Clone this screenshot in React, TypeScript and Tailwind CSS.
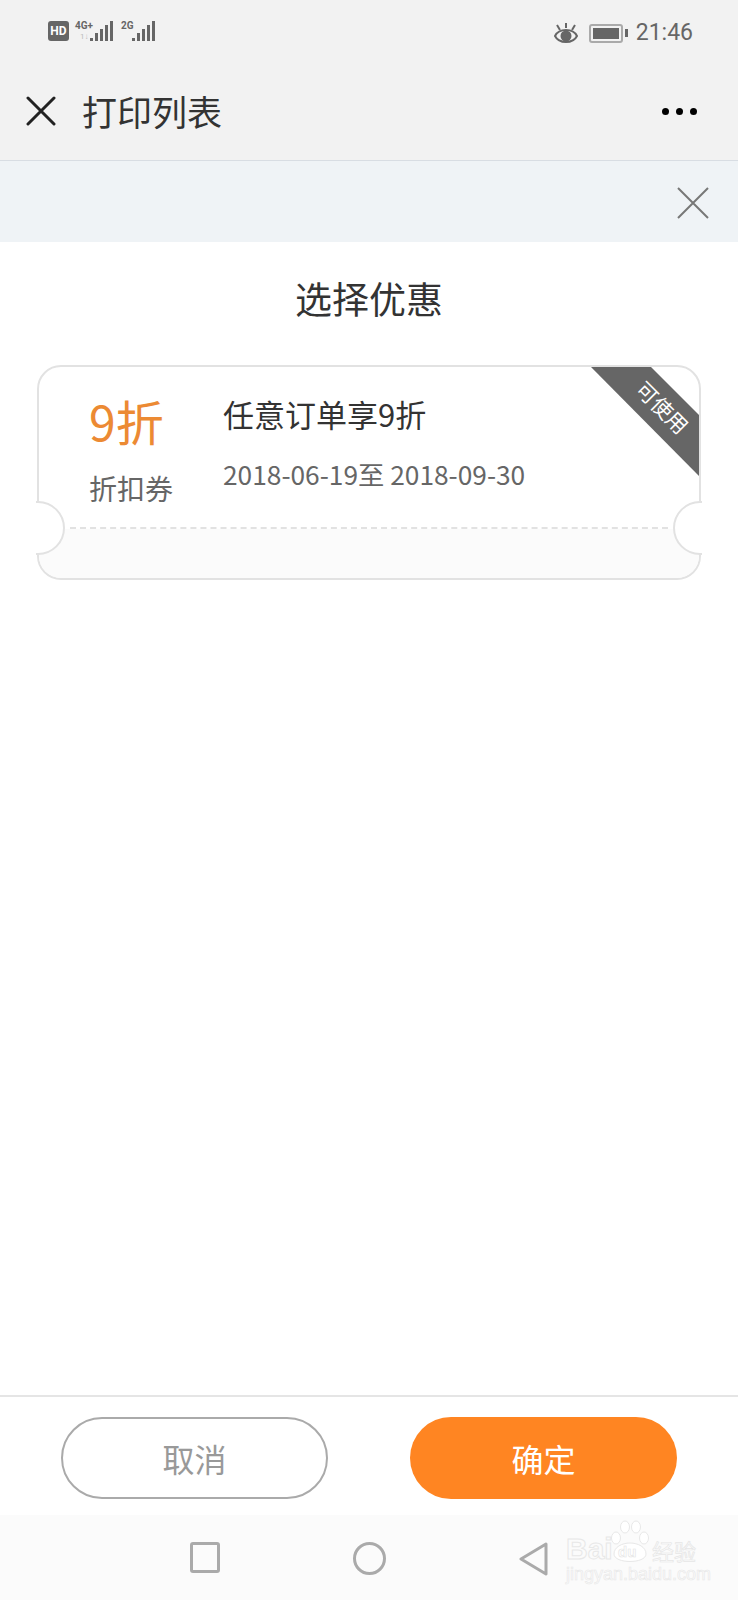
const cjk = "font-['Noto_Sans_CJK_SC',sans-serif]";

function SignalBars() {
  return (
    <svg width="23" height="21" viewBox="0 0 23 21" fill="#666">
      <rect x="0" y="17" width="3" height="3" />
      <rect x="5" y="12" width="3" height="8" />
      <rect x="10" y="8" width="3" height="12" />
      <rect x="15" y="4" width="3" height="16" />
      <rect x="20" y="0" width="3" height="20" />
    </svg>
  );
}

function StatusBar() {
  return (
    <div className="h-[64px] flex items-start justify-between pt-[21px] pl-[48px] pr-[45px]">
      <div className="flex items-start">
        <div className="w-[21px] h-[20px] rounded-[3px] bg-[#666] text-white text-[12px] leading-[20px] font-bold text-center font-['Roboto',sans-serif]">
          HD
        </div>
        <div className="relative w-[15px] ml-[6px] mt-[-1px] h-[22px] text-[10px] leading-[12px] font-bold text-[#666] whitespace-nowrap font-['Roboto',sans-serif]">
          4G+
          <span className="absolute left-[5px] top-[12px] text-[8px] leading-[10px] font-normal text-[#bbb]">1↓</span>
        </div>
        <SignalBars />
        <div className="ml-[8px] w-[11px] mt-[-1px] text-[10px] leading-[12px] font-bold text-[#666] whitespace-nowrap font-['Roboto',sans-serif]">2G</div>
        <SignalBars />
      </div>
      <div className="flex items-center text-[#666]">
        <svg width="24" height="21" viewBox="0 0 24 21" fill="none" stroke="#666" strokeWidth="2">
          <path d="M1 13 C5 5 19 5 23 13 C19 21 5 21 1 13 Z" />
          <circle cx="12" cy="13" r="4.5" fill="#666" />
          <path d="M3 2 L6 7 M21 2 L18 7 M12 0 L12 5" />
        </svg>
        <div className="ml-[11px] w-[34px] h-[19px] rounded-[3px] border-2 border-[#aaa] p-[2px]">
          <div className="w-full h-full bg-[#666]" />
        </div>
        <div className="ml-[2px] w-[3px] h-[8px] bg-[#666]" />
        <span className="ml-[8px] text-[23px] leading-[24px] font-['Roboto',sans-serif]">21:46</span>
      </div>
    </div>
  );
}

function Ticket() {
  return (
    <div className="relative mx-[37px] mt-[40px] h-[215px] rounded-[24px] border-2 border-[#e2e2e2] flex flex-col overflow-hidden bg-white">
      <div className="h-[160px] flex pl-[50px]">
        <div className="w-[134px] flex flex-col">
          <span className="mt-[17px] text-[48px] leading-[72px] text-[#ec8a33]">9折</span>
          <span className="mt-[11px] text-[28px] leading-[42px] text-[#666]">折扣券</span>
        </div>
        <div className="flex flex-col">
          <span className="mt-[25px] text-[31px] leading-[44px] text-[#333]">任意订单享9折</span>
          <span className="mt-[18px] text-[26.3px] leading-[40px] text-[#666]">2018-06-19至 2018-09-30</span>
        </div>
      </div>
      <div className="mx-[31px] border-t-2 border-dashed border-[#e2e2e2]" />
      <div className="flex-1 bg-[#fbfbfb]" />

      <div className="absolute top-[-2px] right-[-2px] w-[112px] h-[113px] bg-[#666] [clip-path:polygon(0_0,60px_0,100%_52px,100%_100%)]">
        <span className="absolute left-[41px] top-[27px] w-[66px] text-center text-white text-[21px] leading-[30px] rotate-45 whitespace-nowrap">
          可使用
        </span>
      </div>
    </div>
  );
}

function Notches() {
  return (
    <>
      <div className="absolute left-[36px] top-[136px] w-[29px] h-[54px] overflow-hidden">
        <div className="absolute left-0 top-[2px] w-[2px] h-[50px] bg-white" />
        <div className="absolute left-[-25px] top-0 w-[54px] h-[54px] rounded-full border-2 border-[#e2e2e2] bg-white" />
      </div>
      <div className="absolute right-[36px] top-[136px] w-[29px] h-[54px] overflow-hidden">
        <div className="absolute left-0 top-0 w-[54px] h-[54px] rounded-full border-2 border-[#e2e2e2] bg-white" />
      </div>
    </>
  );
}

function Watermark() {
  return (
    <div className="absolute left-[566px] top-[1519px] w-[136px] h-[66px] font-['Liberation_Sans',sans-serif] text-transparent">
      <svg className="absolute left-[45px] top-[1px]" width="38" height="44" viewBox="0 0 38 44" fill="#fff" stroke="#e8e8e8" strokeWidth="1">
        <ellipse cx="5" cy="18" rx="4.5" ry="6" />
        <ellipse cx="14" cy="7" rx="4.5" ry="6" />
        <ellipse cx="25" cy="7" rx="4.5" ry="6" />
        <ellipse cx="33" cy="18" rx="4.5" ry="6" />
        <path d="M3 34 C3 27 11 23 19 23 C27 23 35 27 35 34 C35 44 3 44 3 34 Z" />
      </svg>
      <span className="absolute left-0 top-[13px] text-[30px] leading-[34px] font-bold [-webkit-text-stroke:1px_#e8e8e8]">Bai</span>
      <span className="absolute left-[52px] top-[24px] text-[15px] leading-[18px] font-bold [-webkit-text-stroke:0.6px_#e4e4e4]">du</span>
      <span className={`absolute left-[86px] top-[17px] text-[22px] leading-[28px] [-webkit-text-stroke:0.7px_#e6e6e6] ${cjk}`}>经验</span>
      <span className="absolute left-0 top-[46px] text-[18px] leading-[18px] whitespace-nowrap [-webkit-text-stroke:0.6px_#e8e8e8]">jingyan.baidu.com</span>
    </div>
  );
}

export default function App() {
  return (
    <div className={`relative w-[738px] h-[1600px] flex flex-col bg-white overflow-hidden ${cjk}`}>
      <div className="bg-[#f2f2f2] h-[160px] flex flex-col shrink-0">
        <StatusBar />
        <div className="flex-1 flex items-center pl-[26px] pr-[41px] pb-[2px]">
          <svg width="30" height="30" viewBox="0 0 30 30" stroke="#222" strokeWidth="3" strokeLinecap="round">
            <path d="M2 2 L28 28 M28 2 L2 28" />
          </svg>
          <span className="ml-[26px] text-[35px] leading-[50px] text-[#333]">打印列表</span>
          <div className="ml-auto flex gap-[7px]">
            <div className="w-[7px] h-[7px] rounded-full bg-black" />
            <div className="w-[7px] h-[7px] rounded-full bg-black" />
            <div className="w-[7px] h-[7px] rounded-full bg-black" />
          </div>
        </div>
      </div>

      <div className="h-[82px] shrink-0 border-t border-[#d8dde3] bg-[#eff3f6] flex items-center justify-end pr-[29px] pt-[3px]">
        <svg width="32" height="32" viewBox="0 0 32 32" stroke="#777" strokeWidth="2">
          <path d="M1 1 L31 31 M31 1 L1 31" />
        </svg>
      </div>

      <main className="flex-1 flex flex-col">
        <h1 className="mt-[29px] text-center text-[37px] leading-[54px] font-normal text-[#333]">选择优惠</h1>
        <div className="relative">
          <Ticket />
          <div className="absolute left-0 right-0 top-[40px] h-[215px]">
            <Notches />
          </div>
        </div>
      </main>

      <div className="h-[120px] shrink-0 border-t-2 border-[#e5e5e5] flex justify-between px-[61px] pt-[20px]">
        <button className="w-[267px] h-[82px] rounded-full border-2 border-[#aaa] text-[32px] text-[#999]">取消</button>
        <button className="w-[267px] h-[82px] rounded-full bg-[#ff8522] text-[32px] text-white">确定</button>
      </div>

      <div className="h-[85px] shrink-0 bg-[#fbfbfb] flex items-start pt-[27px] pl-[190px]">
        <div className="w-[30px] h-[31px] rounded-[3px] border-[3px] border-[#aaa]" />
        <div className="ml-[133px] w-[33px] h-[33px] rounded-full border-[3px] border-[#aaa]" />
        <svg className="ml-[133px]" width="30" height="34" viewBox="0 0 30 34" fill="none" stroke="#aaa" strokeWidth="3" strokeLinejoin="round">
          <path d="M27 2 L2 17 L27 32 Z" />
        </svg>
      </div>
      <Watermark />
    </div>
  );
}
